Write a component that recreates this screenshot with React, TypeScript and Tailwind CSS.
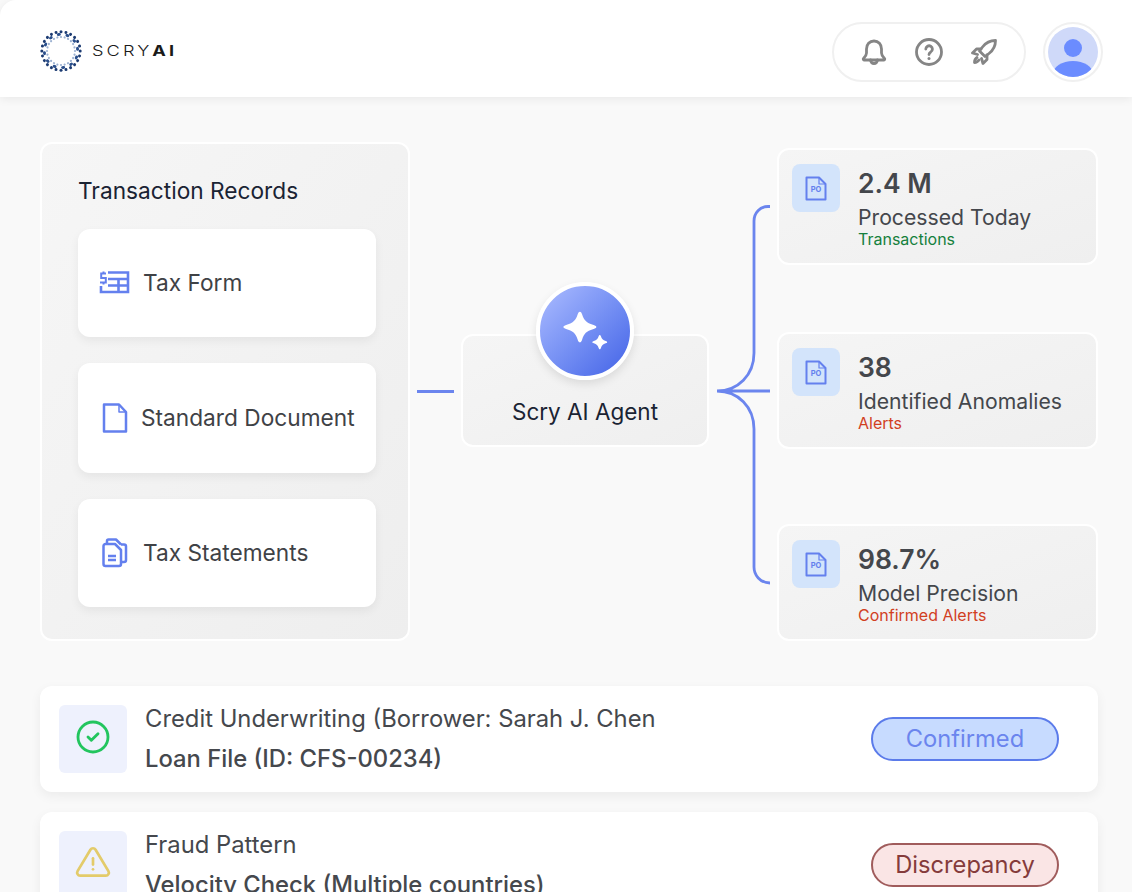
import { TbCircleCheck, TbAlertTriangle } from "react-icons/tb"

const dots = Array.from({ length: 24 }, (_, i) => (i * 360) / 24)

function Logo() {
  return (
    <div className="flex items-center">
      <svg width="42" height="42" viewBox="0 0 42 42">
        {dots.map((a, i) => (
          <g key={a} transform={`rotate(${a} 21 21)`}>
            <circle cx="21" cy="1.800" r="1.500" fill="#1c3b72" />
            <circle cx={i % 2 ? 22.600 : 19.400} cy="4.400" r="1.400" fill="#2a4f8c" />
            <circle cx="21" cy="7" r="1.100" fill="#9db2d2" />
          </g>
        ))}
      </svg>
      <div className="ml-[10px] origin-left scale-x-[1.3] text-[14px] leading-none tracking-[0.17em] text-[#1a1a1a]">
        <span className="font-light">SCRY</span>
        <span className="font-bold">AI</span>
      </div>
    </div>
  )
}

function BellIcon() {
  return (
    <svg width="26" height="26" viewBox="0 0 26 26" fill="none" stroke="currentColor" strokeWidth="2.800" strokeLinecap="round" strokeLinejoin="round">
      <path d="M13 2c-4.500 0-7.500 3.500-7.500 8v4c0 2.500-1.500 4-3 5.500-.5.5-.2 1.500.5 1.500h20c.7 0 1-1 .5-1.500-1.500-1.500-3-3-3-5.500v-4c0-4.500-3-8-7.500-8z" />
      <path d="M9.500 21c.3 2 1.700 3.500 3.500 3.500s3.200-1.500 3.500-3.500" />
    </svg>
  )
}

function HelpIcon() {
  return (
    <svg width="28" height="28" viewBox="0 0 28 28" fill="none" stroke="currentColor" strokeWidth="2.800" strokeLinecap="round">
      <circle cx="14" cy="14" r="12.500" />
      <path d="M10.800 11a3.300 3.300 0 1 1 5 2.900c-1.100.6-1.800 1.300-1.800 2.700" />
      <path d="M14 20.500v.1" strokeWidth="3" />
    </svg>
  )
}

function RocketIcon() {
  return (
    <svg width="26" height="26" viewBox="0 0 26 26" fill="none" stroke="currentColor" strokeWidth="2.800" strokeLinecap="round" strokeLinejoin="round">
      <path d="M24.500 1.500c-5 0-9.500 2-13 6.500L8.500 12l5.500 5.500 4-3c4.500-3.500 6.500-8 6.500-13z" />
      <path d="M10 10H5.500L1.500 14l5 1.500" />
      <path d="M16 16v4.500l-4 4-1.500-5" />
      <path d="M6 18.500c-1.500 1-2.500 3-2.500 5 2 0 3.500-1 4.500-2.500" />
    </svg>
  )
}

function TaxFormIcon() {
  return (
    <svg width="32" height="26" viewBox="0 0 32 26" fill="none" stroke="#6480ee" strokeWidth="2.600">
      <path d="M10 2.500h20V22H3v-6" />
      <path d="M10 9h20M10 15.500h20M20.500 9v13" />
      <path d="M8 3.500H3.200v4.500h4.600v4.500H2M5.500 1.500v2M5.500 12.500v2" strokeWidth="2" />
    </svg>
  )
}

function DocIcon() {
  return (
    <svg width="26" height="30" viewBox="0 0 26 30" fill="none" stroke="#6480ee" strokeWidth="2.500" strokeLinejoin="round">
      <path d="M2 1.500h15l7 7.500v19.500H2z" />
      <path d="M17 1.500V9h7" strokeWidth="1.500" />
    </svg>
  )
}

function StatementIcon() {
  return (
    <svg width="26" height="30" viewBox="0 0 26 30" fill="none" stroke="#6480ee" strokeWidth="2.500" strokeLinejoin="round">
      <path d="M5 5V3a1.500 1.500 0 0 1 1.500-1.500H14l5 5" />
      <path d="M1.500 8a2 2 0 0 1 2-2H13l6 6v14a2 2 0 0 1-2 2H3.500a2 2 0 0 1-2-2z" />
      <path d="M19 6.500h3a2 2 0 0 1 2 2V22a2 2 0 0 1-2 2h-3" />
      <path d="M6 18h8M6 22h8" />
    </svg>
  )
}

function PoIcon() {
  return (
    <svg width="22" height="25" viewBox="0 0 22 25" fill="none" stroke="#6480ee" strokeWidth="2" strokeLinejoin="round">
      <path d="M1.500 1.500h12.500l6.500 6.500v15.500H1.500z" />
      <path d="M14 1.500V8h6.500" strokeWidth="1.200" />
      <text x="11" y="16" textAnchor="middle" fontSize="7.500" fontWeight="700" fill="#6480ee" stroke="none" fontFamily="Inter, sans-serif">PO</text>
    </svg>
  )
}

function Sparkles() {
  return (
    <svg width="50" height="50" viewBox="0 -1.500 44 44" fill="#fff">
      <path d="M17.500 3.500c1 0 1.500 1 2 2.500 1.500 5 4 7.500 9.500 9 1.500.5 3 1 3 2s-1.500 1.500-3 2c-5.500 1.500-8 4-9.500 9-.5 1.500-1 2.500-2 2.500s-1.500-1-2-2.500c-1.500-5-4-7.500-9.500-9-1.500-.5-3-1-3-2s1.500-1.500 3-2c5.500-1.500 8-4 9.500-9 .5-1.500 1-2.500 2-2.500z" />
      <path d="M35 24c.5 0 .7.500 1 1.200.7 2.300 1.800 3.500 4.200 4.200.8.200 1.300.4 1.300.9s-.5.700-1.300.9c-2.400.7-3.500 1.900-4.200 4.200-.3.800-.5 1.100-1 1.100s-.7-.3-1-1.100c-.7-2.300-1.800-3.500-4.200-4.200-.8-.2-1.300-.4-1.300-.9s.5-.7 1.300-.9c2.400-.7 3.500-1.900 4.200-4.200.3-.7.500-1.200 1-1.200z" />
    </svg>
  )
}

const sources = [
  { label: "Tax Form", icon: <TaxFormIcon />, h: "h-[108px]", pl: "pl-[20px]", gap: "gap-[13px]" },
  { label: "Standard Document", icon: <DocIcon />, h: "h-[110px]", pl: "pl-[24px]", gap: "gap-[13px]" },
  { label: "Tax Statements", icon: <StatementIcon />, h: "h-[108px]", pl: "pl-[24px]", gap: "gap-[15px]" },
]

const stats = [
  { value: "2.4 M", title: "Processed Today", note: "Transactions", color: "text-[#15803d]", mt: "" },
  { value: "38", title: "Identified Anomalies", note: "Alerts", color: "text-[#d1401f]", mt: "mt-[67px]" },
  { value: "98.7%", title: "Model Precision", note: "Confirmed Alerts", color: "text-[#d1401f]", mt: "mt-[75px]" },
]

function StatCard({ value, title, note, color, mt }: (typeof stats)[number]) {
  return (
    <div className={`${mt} flex h-[117px] w-[321px] rounded-xl border-2 border-white bg-gradient-to-br from-[#f5f5f5] to-[#efefef] pl-[13px] pt-[14px]`}>
      <div className="flex h-[48px] w-[48px] items-center justify-center rounded-lg bg-[#d3e4fb]">
        <PoIcon />
      </div>
      <div className="ml-[18px] text-[#44474c]">
        <div className="mt-[1px] text-[26.500px] font-semibold leading-[36px]">{value}</div>
        <div className="mt-[3px] text-[21.200px] leading-[26px]">{title}</div>
        <div className={`text-[16px] leading-[18px] ${color}`}>{note}</div>
      </div>
    </div>
  )
}

function ResultRow({ icon, title, sub, badge, badgeClass, mt }: { icon: React.ReactNode; title: string; sub: string; badge: string; badgeClass: string; mt?: string }) {
  return (
    <div className={`${mt ?? ""} flex h-[106px] w-[1058px] shrink-0 items-center rounded-xl bg-white pl-[19px] pr-[39px] shadow-[0_4px_12px_rgba(0,0,0,0.06)]`}>
      <div className="flex h-[68px] w-[68px] items-center justify-center rounded-md bg-[#eef1fd]">{icon}</div>
      <div className="ml-[18px] flex-1 text-[#45484d]">
        <div className="text-[23.800px] leading-[28px]">{title}</div>
        <div className="mt-[12px] text-[23.800px] font-medium leading-[28px]">{sub}</div>
      </div>
      <div className={`flex h-[44px] w-[188px] items-center justify-center rounded-full border-2 text-[23.700px] ${badgeClass}`}>{badge}</div>
    </div>
  )
}

export default function App() {
  return (
    <div className="h-[892px] w-[1132px] overflow-hidden bg-[#f9f9f9] font-['Inter',sans-serif]">
      <header className="flex h-[97px] items-center justify-between rounded-tl-2xl bg-white pl-[40px] pr-[29px] pt-[4px] shadow-[0_2px_10px_rgba(0,0,0,0.07)]">
        <Logo />
        <div className="mt-[3px] flex items-center">
          <div className="flex h-[60px] w-[194px] items-center justify-center gap-[28px] rounded-full border-2 border-[#f0f0f0] text-[#858585]">
            <BellIcon />
            <HelpIcon />
            <RocketIcon />
          </div>
          <div className="ml-[17px] flex h-[60px] w-[60px] items-center justify-center rounded-full border-2 border-[#f0f0f0]">
            <svg width="50" height="50" viewBox="0 0 50 50">
              <clipPath id="avatar"><circle cx="25" cy="25" r="25" /></clipPath>
              <g clipPath="url(#avatar)">
                <rect width="50" height="50" fill="#cfd9f9" />
                <circle cx="25" cy="21" r="9" fill="#6b8cff" />
                <ellipse cx="25" cy="47" rx="20" ry="13" fill="#6b8cff" />
              </g>
            </svg>
          </div>
        </div>
      </header>

      <main className="pl-[40px] pt-[45px]">
        <div className="flex items-start">
          <section className="h-[499px] w-[370px] shrink-0 rounded-xl border-2 border-white bg-gradient-to-br from-[#f6f6f6] to-[#eeeeee] pl-[36px] pt-[32px]">
            <h2 className="text-[22.700px] leading-[30px] text-[#1a2333]">Transaction Records</h2>
            <div className="mt-[23px] flex w-[298px] flex-col gap-[26px]">
              {sources.map((s) => (
                <div key={s.label} className={`flex ${s.h} ${s.pl} ${s.gap} items-center rounded-xl bg-white text-[22.700px] text-[#3f4246] shadow-[0_4px_10px_rgba(0,0,0,0.06)]`}>
                  {s.icon}
                  <span>{s.label}</span>
                </div>
              ))}
            </div>
          </section>

          <div className="ml-[7px] mt-[248px] h-[3px] w-[37px] bg-[#6b85ee]" />

          <div className="relative ml-[7px] mt-[192px] flex h-[113px] w-[248px] shrink-0 items-end justify-center rounded-xl border-2 border-white bg-gradient-to-br from-[#f5f5f5] to-[#efefef] pb-[18px] text-[22.500px] leading-[30px] text-[#1a2333]">
            <div className="absolute left-[73px] top-[-54px] flex h-[98px] w-[98px] items-center justify-center rounded-full border-4 border-white bg-gradient-to-br from-[#adbcff] to-[#4461e6] shadow-[0_4px_10px_rgba(0,0,0,0.1)]">
              <Sparkles />
            </div>
            Scry AI Agent
          </div>

          <svg className="ml-[7px] mt-[63px] shrink-0" width="54" height="382" viewBox="0 0 54 382" fill="none" stroke="#6b85ee" strokeWidth="2.800">
            <path d="M54 1.500H52C44 1.500 38 8 38 16V148C38 170 22 186 1 186M54 186H1M1 186C22 186 38 202 38 224V362C38 370 44 378 54 378" />
          </svg>

          <div className="ml-[7px] mt-[6px] flex flex-col">
            {stats.map((s) => (
              <StatCard key={s.title} {...s} />
            ))}
          </div>
        </div>

        <div className="mt-[45px] flex flex-col">
          <ResultRow
            icon={<TbCircleCheck size={40} strokeWidth={1.7} className="-mt-[5px] text-[#22c55e]" />}
            title="Credit Underwriting (Borrower: Sarah J. Chen"
            sub="Loan File (ID: CFS-00234)"
            badge="Confirmed"
            badgeClass="border-[#5b7bea] bg-[#c7dbff] text-[#6b85ee]"
          />
          <ResultRow
            mt="mt-[20px]"
            icon={<TbAlertTriangle size={38} strokeWidth={1.7} className="-mt-[5px] text-[#e3cb6a]" />}
            title="Fraud Pattern"
            sub="Velocity Check (Multiple countries)"
            badge="Discrepancy"
            badgeClass="border-[#a05c5c] bg-[#fae5e5] text-[#853b3b]"
          />
        </div>
      </main>
    </div>
  )
}
